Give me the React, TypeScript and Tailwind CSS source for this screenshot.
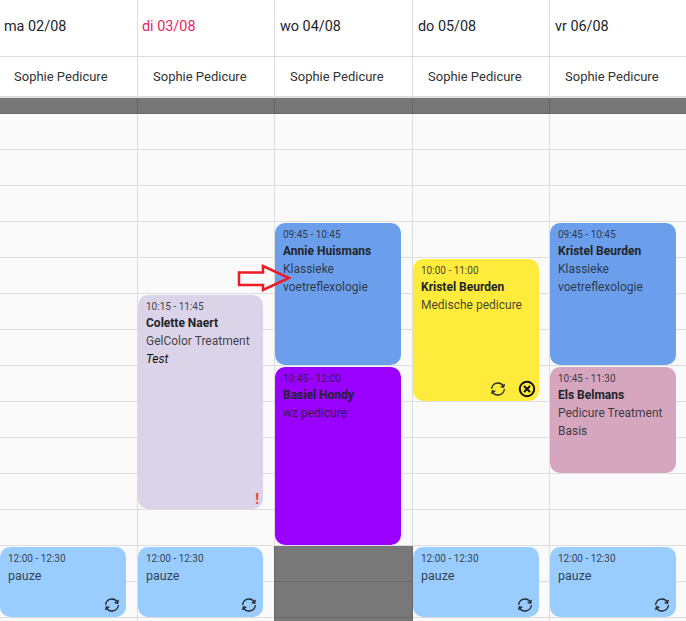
const days = [
  { label: "ma 02/08" },
  { label: "di 03/08", today: true },
  { label: "wo 04/08" },
  { label: "do 05/08" },
  { label: "vr 06/08" },
];

const rows = Array.from({ length: 14 });

function SyncIcon() {
  return (
    <svg width="16" height="16" viewBox="0 0 16 16" fill="none" stroke="#212529" strokeWidth="1.3">
      <path d="M1.6 8A6.4 6.7 0 0 1 13.4 5.2" />
      <path d="M10.6 5.6L13.6 6.2L14.3 2.9" />
      <path d="M14.4 8A6.4 6.7 0 0 1 2.6 10.8" />
      <path d="M5.4 10.4L2.4 9.8L1.7 13.1" />
    </svg>
  );
}

function CancelIcon() {
  return (
    <svg width="18" height="18" viewBox="0 0 18 18" fill="none" stroke="#111" strokeWidth="2">
      <circle cx="9" cy="9" r="7.2" />
      <path d="M6 6l6 6M12 6l-6 6" />
    </svg>
  );
}

function Card({ top, height, color, time, name, lines, note, width = "w-[126px]", body = "text-[12px] leading-[18px]", children }: any) {
  return (
    <div className={`absolute left-0 rounded-[10px] pl-2 pt-[5px] text-[#212529]/85 ${width} ${color} ${top} ${height}`}>
      <div className="text-[10px] leading-[14px]">{time}</div>
      {name && <div className="text-[12px] font-bold leading-[18px] text-[#212529]">{name}</div>}
      {lines.map((l: string) => (
        <div key={l} className={body}>{l}</div>
      ))}
      {note && <div className="text-[12px] italic leading-[18px] text-[#111]">{note}</div>}
      {children}
    </div>
  );
}

function Pauze({ width }: { width?: string }) {
  return (
    <Card top="top-[449px]" height="h-[70px]" color="bg-[#99ccff]" time="12:00 - 12:30" lines={["pauze"]} width={width} body="text-[12.5px] leading-[20px]">
      <div className="absolute bottom-[4px] right-[6px] flex"><SyncIcon /></div>
    </Card>
  );
}

export default function App() {
  return (
    <div className="h-[621px] w-[686px] overflow-hidden bg-[#fafafa] font-['Roboto',sans-serif]">
      <div className="grid grid-cols-[138px_137px_138px_137px_136px] bg-white">
        {days.map((d, i) => (
          <div key={d.label} className="border-r border-[#ddd] last:border-r-0">
            <div className={`flex h-[57px] items-center border-b border-[#ddd] pb-[3px] text-[14.4px] ${i >= 2 ? "pl-[5px]" : "pl-1"} ${d.today ? "text-[#e91e63]" : "text-[#212529]"}`}>
              {d.label}
            </div>
            <div className={`flex h-[41px] items-center border-b-2 border-[#ddd] text-[13px] text-[#333] ${i === 0 ? "pl-[14px]" : "pl-[15px]"}`}>
              Sophie Pedicure
            </div>
          </div>
        ))}
      </div>
      <div className="grid grid-cols-[138px_137px_138px_137px_136px]">
        {days.map((d, i) => (
          <div key={d.label} className="relative h-[523px] border-r border-[#ddd] last:border-r-0">
            <div className="-mr-px h-[16px] border-r border-b border-[#666] bg-[#777]" />
            {rows.map((_, r) => (
              <div key={r} className="h-[36px] border-b border-[#ddd]" />
            ))}
            {i === 0 && <Pauze />}
            {i === 1 && (
              <>
                <Card top="top-[197px]" height="h-[214px]" width="w-[125px]" color="bg-[#dbd3e8]" time="10:15 - 11:45" name="Colette Naert" lines={["GelColor Treatment"]} note="Test">
                  <span className="absolute bottom-[1px] right-[4px] text-[14px] font-bold leading-[18px] text-[#f44336]">!</span>
                </Card>
                <Pauze width="w-[125px]" />
              </>
            )}
            {i === 2 && (
              <>
                <Card top="top-[125px]" height="h-[142px]" color="bg-[#6b9fec]" time="09:45 - 10:45" name="Annie Huismans" lines={["Klassieke", "voetreflexologie"]} />
                <Card top="top-[269px]" height="h-[178px]" color="bg-[#9900ff]" time="10:45 - 12:00" name="Basiel Hondy" lines={["wz pedicure"]} />
                <div className="absolute -left-px -right-px top-[448px] h-[80px] border-r border-[#666] bg-black/[0.52]" />
              </>
            )}
            {i === 3 && (
              <>
                <Card top="top-[161px]" height="h-[142px]" color="bg-[#ffeb3b]" time="10:00 - 11:00" name="Kristel Beurden" lines={["Medische pedicure"]}>
                  <div className="absolute bottom-[3px] right-[3px] flex items-center gap-[12px]">
                    <SyncIcon />
                    <CancelIcon />
                  </div>
                </Card>
                <Pauze />
              </>
            )}
            {i === 4 && (
              <>
                <Card top="top-[125px]" height="h-[142px]" color="bg-[#6b9fec]" time="09:45 - 10:45" name="Kristel Beurden" lines={["Klassieke", "voetreflexologie"]} />
                <Card top="top-[269px]" height="h-[106px]" color="bg-[#d5a6bd]" time="10:45 - 11:30" name="Els Belmans" lines={["Pedicure Treatment", "Basis"]} />
                <Pauze />
              </>
            )}
            {i === 2 && (
              <svg className="absolute left-[-39px] top-[166px]" width="56" height="30" viewBox="0 0 56 30" fill="none">
                <path d="M3 8.5H27V2L53 14L27 26V21H3Z" stroke="#ed1c24" strokeWidth="2.5" />
              </svg>
            )}
          </div>
        ))}
      </div>
    </div>
  );
}
